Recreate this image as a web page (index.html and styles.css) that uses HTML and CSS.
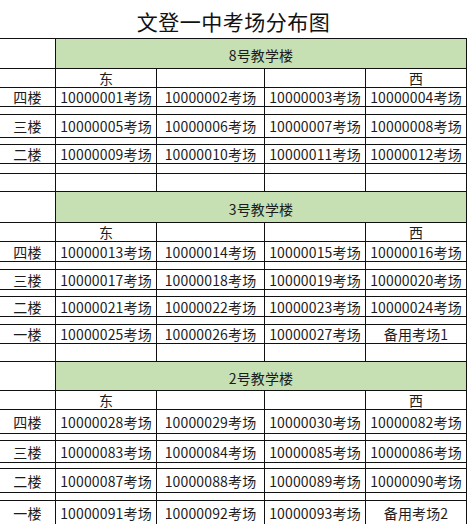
FILE: index.html
```html
<!DOCTYPE html>
<html lang="zh-CN">
<head>
<meta charset="utf-8">
<title>文登一中考场分布图</title>
<link rel="stylesheet" href="styles.css">
</head>
<body>
<div class="sheet">
  <div class="row h39"><div class="cell title">文登一中考场分布图</div></div>

  <div class="row h30"><div class="cell ca"></div><div class="cell band">8号教学楼</div></div>
  <div class="row h19"><div class="cell ca"></div><div class="cell cb">东</div><div class="cell cc"></div><div class="cell cd"></div><div class="cell ce">西</div></div>
  <div class="row h19"><div class="cell ca">四楼</div><div class="cell cb">10000001考场</div><div class="cell cc">10000002考场</div><div class="cell cd">10000003考场</div><div class="cell ce">10000004考场</div></div>
  <div class="row h8"><div class="cell ca"></div><div class="cell cb"></div><div class="cell cc"></div><div class="cell cd"></div><div class="cell ce"></div></div>
  <div class="row h23"><div class="cell ca">三楼</div><div class="cell cb">10000005考场</div><div class="cell cc">10000006考场</div><div class="cell cd">10000007考场</div><div class="cell ce">10000008考场</div></div>
  <div class="row h7"><div class="cell ca"></div><div class="cell cb"></div><div class="cell cc"></div><div class="cell cd"></div><div class="cell ce"></div></div>
  <div class="row h19"><div class="cell ca">二楼</div><div class="cell cb">10000009考场</div><div class="cell cc">10000010考场</div><div class="cell cd">10000011考场</div><div class="cell ce">10000012考场</div></div>
  <div class="row h10"><div class="cell ca"></div><div class="cell cb"></div><div class="cell cc"></div><div class="cell cd"></div><div class="cell ce"></div></div>
  <div class="row h18"><div class="cell ca"></div><div class="cell cb"></div><div class="cell cc"></div><div class="cell cd"></div><div class="cell ce"></div></div>

  <div class="row h31"><div class="cell ca"></div><div class="cell band">3号教学楼</div></div>
  <div class="row h19"><div class="cell ca"></div><div class="cell cb">东</div><div class="cell cc"></div><div class="cell cd"></div><div class="cell ce">西</div></div>
  <div class="row h20"><div class="cell ca">四楼</div><div class="cell cb">10000013考场</div><div class="cell cc">10000014考场</div><div class="cell cd">10000015考场</div><div class="cell ce">10000016考场</div></div>
  <div class="row h8"><div class="cell ca"></div><div class="cell cb"></div><div class="cell cc"></div><div class="cell cd"></div><div class="cell ce"></div></div>
  <div class="row h20"><div class="cell ca">三楼</div><div class="cell cb">10000017考场</div><div class="cell cc">10000018考场</div><div class="cell cd">10000019考场</div><div class="cell ce">10000020考场</div></div>
  <div class="row h7"><div class="cell ca"></div><div class="cell cb"></div><div class="cell cc"></div><div class="cell cd"></div><div class="cell ce"></div></div>
  <div class="row h20"><div class="cell ca">二楼</div><div class="cell cb">10000021考场</div><div class="cell cc">10000022考场</div><div class="cell cd">10000023考场</div><div class="cell ce">10000024考场</div></div>
  <div class="row h8"><div class="cell ca"></div><div class="cell cb"></div><div class="cell cc"></div><div class="cell cd"></div><div class="cell ce"></div></div>
  <div class="row h19"><div class="cell ca">一楼</div><div class="cell cb">10000025考场</div><div class="cell cc">10000026考场</div><div class="cell cd">10000027考场</div><div class="cell ce">备用考场1</div></div>
  <div class="row h18"><div class="cell ca"></div><div class="cell cb"></div><div class="cell cc"></div><div class="cell cd"></div><div class="cell ce"></div></div>

  <div class="row h29"><div class="cell ca"></div><div class="cell band">2号教学楼</div></div>
  <div class="row h19"><div class="cell ca"></div><div class="cell cb">东</div><div class="cell cc"></div><div class="cell cd"></div><div class="cell ce">西</div></div>
  <div class="row h24"><div class="cell ca">四楼</div><div class="cell cb">10000028考场</div><div class="cell cc">10000029考场</div><div class="cell cd">10000030考场</div><div class="cell ce">10000082考场</div></div>
  <div class="row h7"><div class="cell ca"></div><div class="cell cb"></div><div class="cell cc"></div><div class="cell cd"></div><div class="cell ce"></div></div>
  <div class="row h22"><div class="cell ca">三楼</div><div class="cell cb">10000083考场</div><div class="cell cc">10000084考场</div><div class="cell cd">10000085考场</div><div class="cell ce">10000086考场</div></div>
  <div class="row h6"><div class="cell ca"></div><div class="cell cb"></div><div class="cell cc"></div><div class="cell cd"></div><div class="cell ce"></div></div>
  <div class="row h24"><div class="cell ca">二楼</div><div class="cell cb">10000087考场</div><div class="cell cc">10000088考场</div><div class="cell cd">10000089考场</div><div class="cell ce">10000090考场</div></div>
  <div class="row h8"><div class="cell ca"></div><div class="cell cb"></div><div class="cell cc"></div><div class="cell cd"></div><div class="cell ce"></div></div>
  <div class="row h24"><div class="cell ca">一楼</div><div class="cell cb">10000091考场</div><div class="cell cc">10000092考场</div><div class="cell cd">10000093考场</div><div class="cell ce">备用考场2</div></div>
</div>
</body>
</html>
```
FILE: styles.css
```css
html, body {
  margin: 0;
  padding: 0;
  background: #ffffff;
}
.sheet {
  width: 467px;
  display: flex;
  flex-direction: column;
  font-family: "Noto Sans CJK SC", "Noto Sans", sans-serif;
  font-size: 14px;
  color: #1c1c1c;
}
.row {
  display: flex;
  flex: none;
  overflow: hidden;
}
.cell {
  box-sizing: border-box;
  height: 100%;
  border-right: 1px solid #111;
  border-bottom: 1px solid #111;
  display: flex;
  align-items: center;
  justify-content: center;
  white-space: nowrap;
  line-height: 1;
  letter-spacing: 0.15px;
}
.ca { width: 56px; }
.cb { width: 101px; }
.cc { width: 108px; }
.cd { width: 101px; }
.ce { width: 101px; }
.title {
  width: 467px;
  border-right: none;
  font-size: 21px;
  color: #111;
  padding-top: 4px;
  letter-spacing: 0.5px;
}
.band {
  width: 411px;
  background: #c6e0b4;
  padding-top: 3px;
}
.h39 { height: 39px; }
.h31 { height: 31px; }
.h30 { height: 30px; }
.h29 { height: 29px; }
.h24 { height: 24px; }
.h23 { height: 23px; }
.h22 { height: 22px; }
.h20 { height: 20px; }
.h19 { height: 19px; }
.h18 { height: 18px; }
.h10 { height: 10px; }
.h8 { height: 8px; }
.h7 { height: 7px; }
.h6 { height: 6px; }
```
